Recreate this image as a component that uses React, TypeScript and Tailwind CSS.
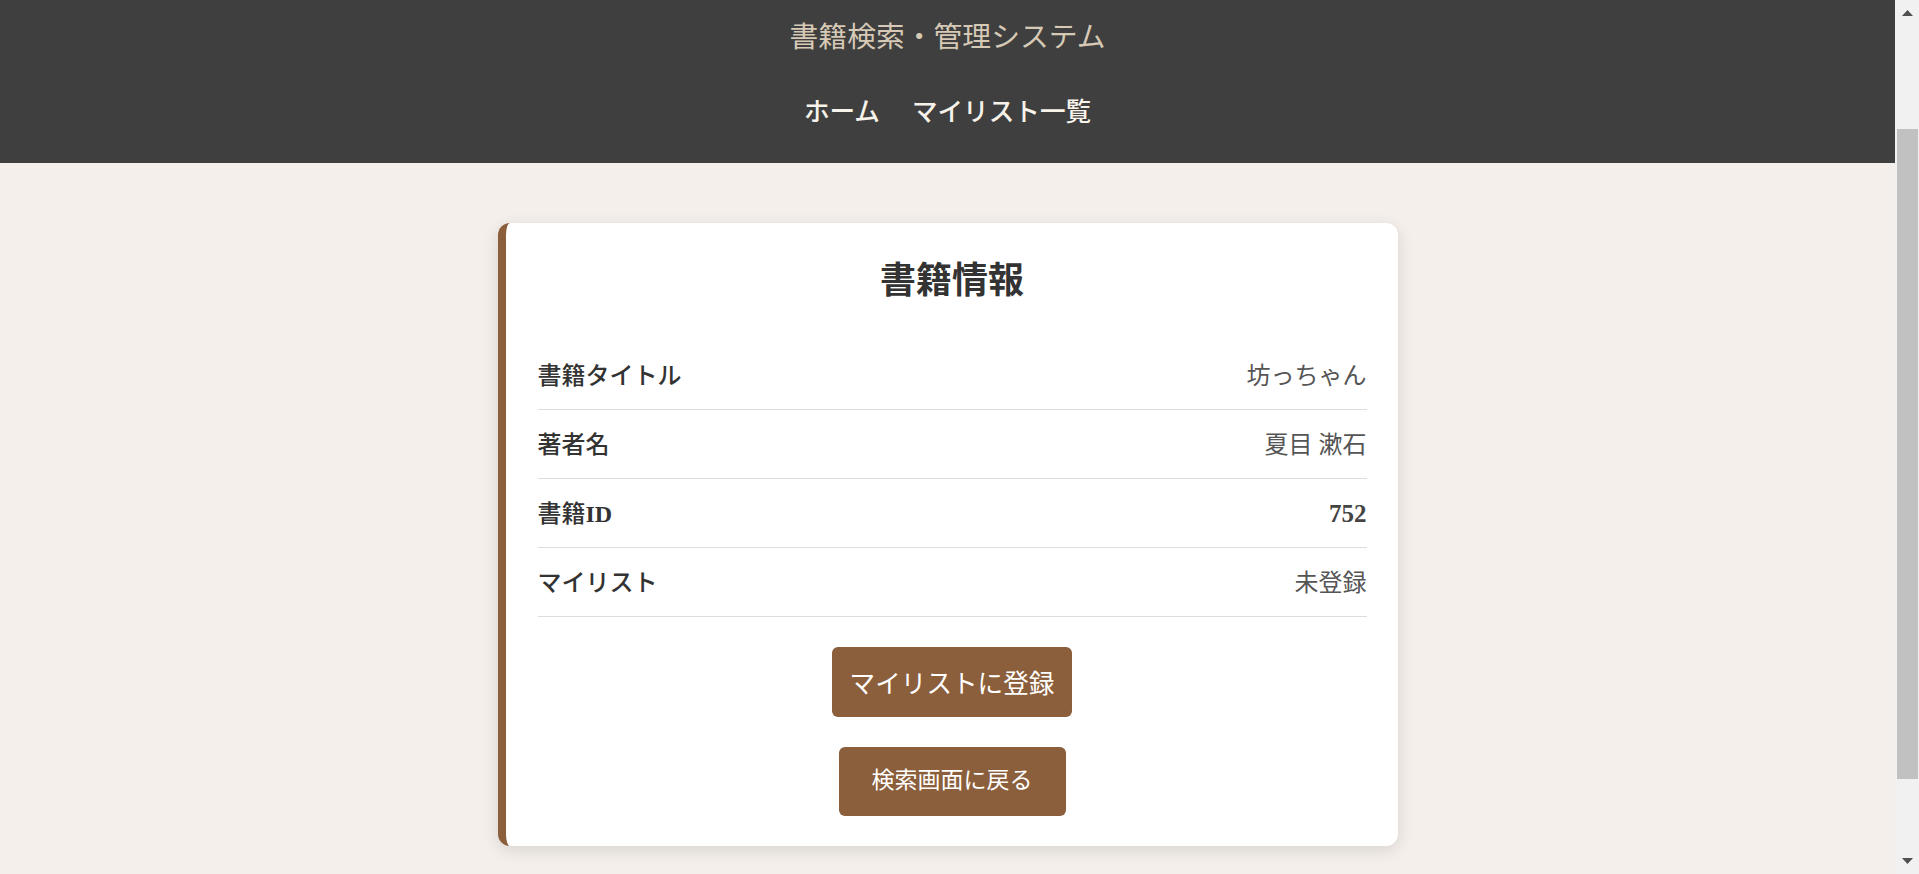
import React from "react";

const serif = { fontFamily: '"Liberation Serif", "Noto Sans CJK JP", serif' };
const sans = { fontFamily: '"Noto Sans CJK JP", "Noto Sans", sans-serif' };

const rows: { label: string; latin?: string; value: string; strong?: boolean }[] = [
  { label: "書籍タイトル", value: "坊っちゃん" },
  { label: "著者名", value: "夏目 漱石" },
  { label: "書籍", latin: "ID", value: "752", strong: true },
  { label: "マイリスト", value: "未登録" },
];

function FakeScrollbar() {
  return (
    <div className="flex w-[24px] shrink-0 flex-col bg-[#f1f1f1]">
      <div className="flex h-[129px] justify-center pt-[10px]">
        <svg width="11" height="6" viewBox="0 0 11 6">
          <polygon points="5.5,0 11,6 0,6" fill="#505050" />
        </svg>
      </div>
      <div className="ml-[2px] h-[650px] w-[21px] bg-[#c1c1c1]" />
      <div className="flex flex-1 items-end justify-center pb-[10px]">
        <svg width="11" height="6" viewBox="0 0 11 6">
          <polygon points="0,0 11,0 5.5,6" fill="#505050" />
        </svg>
      </div>
    </div>
  );
}

export default function App() {
  return (
    <div className="flex h-[874px] w-full overflow-hidden bg-[#f4efea]" style={serif}>
      <div className="flex min-w-0 flex-1 flex-col">
        <header className="flex h-[163px] shrink-0 flex-col items-center bg-[#3f3f3f] pt-[16px]">
          <div className="text-[28.8px] leading-[42px] text-[#d6c9b6]">書籍検索・管理システム</div>
          <nav className="mt-[36px] flex gap-[32px] text-[25.6px] leading-[37px] font-medium text-[#f7f2ea]">
            <a>ホーム</a>
            <a>マイリスト一覧</a>
          </nav>
        </header>
        <main className="flex justify-center pt-[60px]">
          <section className="w-[900px] rounded-xl border-l-[8px] border-[#8b5e3c] bg-white pt-[32px] pr-[31px] pb-[30px] pl-[32px] shadow-[0_4px_16px_rgba(0,0,0,0.12)]">
            <h1 className="mb-[34px] text-center text-[36px] leading-[52px] font-bold text-[#333333]">書籍情報</h1>
            <div className="flex flex-col">
              {rows.map((r) => (
                <div
                  key={r.label}
                  className="flex h-[69px] items-center justify-between border-b border-[#dddddd] pt-[2px]"
                >
                  <span className="text-[24px] font-medium text-[#333333]">
                    {r.label}
                    {r.latin && <span className="font-bold">{r.latin}</span>}
                  </span>
                  <span className={r.strong ? "text-[25px] font-bold text-[#444444]" : "text-[24px] text-[#555555]"}>
                    {r.value}
                  </span>
                </div>
              ))}
            </div>
            <div className="mt-[30px] flex flex-col items-center gap-[30px]">
              <button
                className="flex h-[70px] items-center justify-center rounded-md bg-[#8b5e3c] px-[18px] text-[25.6px] text-white"
                style={sans}
              >
                マイリストに登録
              </button>
              <button className="flex h-[69px] items-center justify-center rounded-md bg-[#8b5e3c] px-[33px] text-[23px] text-white">
                検索画面に戻る
              </button>
            </div>
          </section>
        </main>
      </div>
      <FakeScrollbar />
    </div>
  );
}
